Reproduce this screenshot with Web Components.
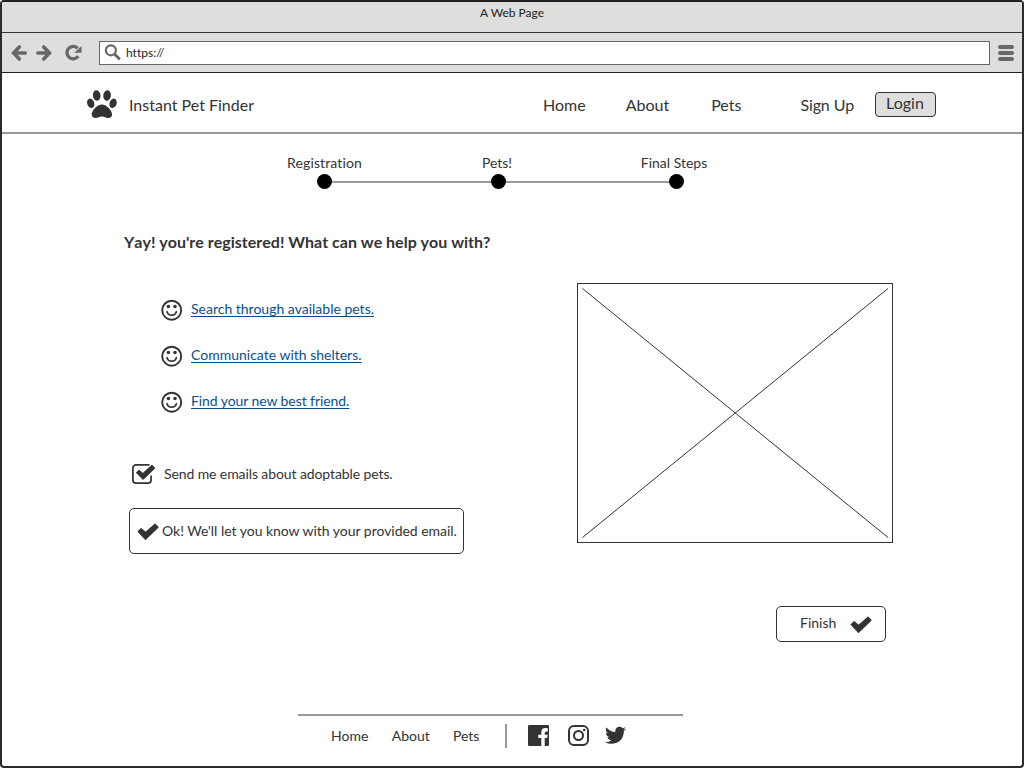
<!DOCTYPE html>
<html lang="en">
<head>
<meta charset="utf-8">
<title>Instant Pet Finder</title>
<style>
html, body { margin: 0; height: 100%; background: #fff; overflow: hidden; }
body { font: 14px/18px Lato, "Liberation Sans", sans-serif; font-variant-ligatures: none; color: #333; }
</style>
</head>
<body>
<browser-window heading="A Web Page" url="https://">
  <site-header></site-header>
  <progress-steps></progress-steps>
  <welcome-page></welcome-page>
  <site-footer></site-footer>
</browser-window>
<script>
const icons = {
  back: '<path d="M8.300 2 2.600 8l5.700 6M4 8h10.200" fill="none" stroke="currentColor" stroke-width="3.600" stroke-linecap="round"/>',
  forward: '<path d="M7.700 2 13.400 8l-5.700 6M12 8H1.800" fill="none" stroke="currentColor" stroke-width="3.600" stroke-linecap="round"/>',
  reload: '<path d="M13.200 12.300A6.200 6.200 0 1 1 12.600 4.300" fill="none" stroke="currentColor" stroke-width="3.300"/><path d="M16.500 2v6.700H9.200z" fill="currentColor"/>',
  search: '<circle cx="5.900" cy="6.300" r="5" fill="none" stroke="currentColor" stroke-width="2.200"/><path d="m10 10.500 4 4" stroke="currentColor" stroke-width="3" stroke-linecap="round"/>',
  menu: '<path d="M2 2h12M2 8h12M2 14h12" stroke="currentColor" stroke-width="4" stroke-linecap="round"/>',
  paw: '<g fill="currentColor"><ellipse cx="9.700" cy="5.500" rx="3.800" ry="5.300" transform="rotate(-8 9.700 5.500)"/><ellipse cx="20.100" cy="5.500" rx="3.800" ry="5.300" transform="rotate(8 20.100 5.500)"/><ellipse cx="3.700" cy="13.300" rx="3.500" ry="4.800" transform="rotate(-20 3.700 13.300)"/><ellipse cx="26.100" cy="13.300" rx="3.500" ry="4.800" transform="rotate(20 26.100 13.300)"/><path d="M14.900 14.600c4.800 0 10.200 6.200 10.200 10 0 2.300-1.700 3.400-3.900 3.400-2.500 0-3.800-1.400-6.300-1.400S11.100 28 8.600 28c-2.200 0-3.900-1.100-3.900-3.400 0-3.800 5.400-10 10.200-10z"/></g>',
  smile: '<circle cx="10.700" cy="11.200" r="9.500" fill="none" stroke="currentColor" stroke-width="1.900"/><circle cx="7.400" cy="7.600" r="1.750" fill="currentColor"/><circle cx="14" cy="7.600" r="1.750" fill="currentColor"/><path d="M6 12.700a4.900 4.900 0 0 0 9.400 0" fill="none" stroke="currentColor" stroke-width="1.700" stroke-linecap="round"/>',
  check: '<path d="m1.200 8.600 2.900-2.900 4.500 3.800L18 1.200l3 3L8.500 16.300z" fill="currentColor" stroke="currentColor" stroke-width="1.200" stroke-linejoin="round"/>',
  checkbox: '<path d="M17.500.9H4A3.100 3.100 0 0 0 .9 4v12A3.100 3.100 0 0 0 4 19.100h12a3.100 3.100 0 0 0 3.100-3.100v-4.500" fill="none" stroke="currentColor" stroke-width="1.700"/><path d="m4.600 8.600 2.500-2.200 3.800 3.300 9-8.200 2.700 2.600L11 15.200z" fill="currentColor" stroke="currentColor" stroke-width="1.200" stroke-linejoin="round"/>',
  facebook: '<path fill="currentColor" d="M1.200 0h18.600Q21 0 21 1.200v18.600q0 1.200-1.200 1.200H16.700v-8h2.500l.5-3.300h-3V7.900q0-1.500 1.600-1.500h1.500V3.200q-.8-.2-2.400-.2-4.100 0-4.100 4.300v2.400h-3V13h3v8H1.200Q0 21 0 19.800V1.200Q0 0 1.200 0z"/>',
  instagram: '<rect x="1" y="1" width="19" height="19" rx="5" fill="none" stroke="currentColor" stroke-width="2"/><circle cx="10.500" cy="10.500" r="4.500" fill="none" stroke="currentColor" stroke-width="2"/><circle cx="16.200" cy="4.900" r="1.250" fill="currentColor"/>',
  twitter: '<path fill="currentColor" transform="translate(0 .8) scale(.01332) translate(-108 -256)" d="M1684 408q-67 98-162 167 1 14 1 42 0 130-38 259.500t-115.500 248.500-184.500 210.500-258 146-323 54.500q-271 0-496-145 35 4 78 4 225 0 401-138-105-2-188-64.500t-114-159.500q33 5 61 5 43 0 85-11-112-23-185.500-111.500t-73.500-205.500v-4q68 38 146 41-66-44-105-115t-39-154q0-88 44-163 121 149 294.500 238.500t371.500 99.500q-8-38-8-74 0-134 94.500-228.500t228.500-94.500q140 0 236 102 109-21 205-78-37 115-142 178 93-10 186-50z"/>'
};
const sizes = { back: [16, 16], forward: [16, 16], reload: [17, 17], search: [17, 17], menu: [16, 16], paw: [30, 28], smile: [22, 22], check: [22, 17], checkbox: [23, 20], facebook: [21, 21], instagram: [21, 21], twitter: [21, 18] };

class Base extends HTMLElement {
  connectedCallback() {
    if (!this.shadowRoot) this.attachShadow({ mode: "open" }).innerHTML = this.view();
  }
}
const define = (name, view) => customElements.define(name, class extends Base { view() { return view(this); } });

define("ui-icon", el => {
  const n = el.getAttribute("name"), [w, h] = sizes[n];
  return `<style>:host{display:block;flex:none;width:${w}px;height:${h}px}svg{display:block;overflow:visible}</style>
  <svg width="${w}" height="${h}" viewBox="0 0 ${w} ${h}" aria-hidden="true">${icons[n]}</svg>`;
});

define("browser-window", el => `<style>
  :host{display:flex;flex-direction:column;box-sizing:border-box;width:1024px;height:768px;border:2px solid #2b292b;border-top-color:#231f20;border-radius:4px;overflow:hidden}
  .title{box-sizing:border-box;height:31px;padding-top:3px;background:#dededc;border-bottom:1px solid #333;text-align:center;font-size:12px;line-height:16px;color:#222}
  .bar{display:flex;align-items:center;box-sizing:border-box;height:40px;background:#dededc;border-bottom:1px solid #222;padding:0 8px 0 9px;color:#686868}
  .fwd{margin-left:9px}.rel{margin-left:13px}
  .url{display:flex;align-items:center;flex:1;height:22px;margin:0 8px 0 17px;border:1px solid #666;background:#fff;padding-left:5px;color:#222;font-size:12px;line-height:16px}
  .url ui-icon{color:#686868;margin-right:4px}
  main{flex:1;display:flex;flex-direction:column;min-height:0}
  </style>
  <div class="title">${el.getAttribute("heading")}</div>
  <div class="bar"><ui-icon name="back"></ui-icon><ui-icon class="fwd" name="forward"></ui-icon><ui-icon class="rel" name="reload"></ui-icon>
  <div class="url"><ui-icon name="search"></ui-icon>${el.getAttribute("url")}</div><ui-icon name="menu"></ui-icon></div>
  <main><slot></slot></main>`);

define("site-header", () => `<style>
  :host{display:flex;align-items:flex-start;box-sizing:border-box;height:61px;padding:17px 86px 0 85px;border-bottom:2px solid #999;font-size:16px;line-height:20px}
  .brand{margin:5px 0 0 12px}
  nav{display:flex;gap:41px;margin:5px 0 0 auto}
  nav span:nth-child(2){margin-left:-1px}
  nav span:last-child{margin-left:1px}
  .sign{margin:5px 21px 0 59px;letter-spacing:-.1px}
  button{display:block;box-sizing:border-box;width:61px;height:25px;margin:2px 0 0;padding:0 1px 3px 0;border:1px solid #333;border-radius:4px;background:#dedede;color:#333;font:16px/20px Lato,sans-serif}
  </style>
  <ui-icon name="paw"></ui-icon><span class="brand">Instant Pet Finder</span>
  <nav><span>Home</span><span>About</span><span>Pets</span></nav><span class="sign">Sign Up</span><button>Login</button>`);

define("progress-steps", () => `<style>
  :host{display:block;padding:20px 0 0 272px}
  .labels{display:grid;grid-template-columns:101px 72px 100px 77px 100px;text-align:center}
  .labels span:first-child{letter-spacing:.12px}
  .labels span:nth-child(2){grid-column:3}.labels span:nth-child(3){grid-column:5}
  .track{display:flex;align-items:center;width:367px;margin:2px 0 0 43px}
  i{width:15px;height:15px;border-radius:50%;background:#000}
  b{height:2px;background:#999;width:159px}b+i+b{width:163px}
  </style>
  <div class="labels"><span>Registration</span><span>Pets!</span><span>Final Steps</span></div>
  <div class="track"><i></i><b></b><i></i><b></b><i></i></div>`);

define("help-link", () => `<style>
  :host{display:flex;align-items:center;height:22px;gap:8px}
  a{color:#0b4f8a;text-decoration:underline;text-decoration-thickness:1px;text-underline-offset:2px;text-decoration-skip-ink:none;margin-top:-2px}
  </style><ui-icon name="smile"></ui-icon><a href="#"><slot></slot></a>`);

define("image-placeholder", () => `<style>
  :host{display:block;box-sizing:border-box;width:316px;height:260px;border:1px solid #333}
  svg{display:block}
  </style><svg width="314" height="258" viewBox="0 0 314 258"><path d="M4.500 4.500 310 253.500M310 4.500 4.500 253.500" stroke="#333"/></svg>`);

define("finish-button", () => `<style>
  :host{display:flex;box-sizing:border-box;width:110px;height:36px;border:1px solid #333;border-radius:5px;padding:7px 0 0 23px}
  ui-icon{margin:2px 0 0 14px}
  </style><span><slot></slot></span><ui-icon name="check"></ui-icon>`);

define("email-notice", () => `<style>
  :host{display:flex;align-items:center;box-sizing:border-box;width:335px;height:46px;border:1px solid #333;border-radius:5px;padding-left:7px;gap:3px;white-space:nowrap;letter-spacing:-.03px}
  </style><ui-icon name="check"></ui-icon><slot></slot>`);

define("welcome-page", () => `<style>
  :host{display:block;padding:43px 129px 0 122px}
  h1{margin:0;font-size:16px;line-height:20px;font-weight:700;font-kerning:none}
  .cols{display:flex;justify-content:space-between;margin-top:31px}
  .links{display:grid;gap:24px;padding:16px 0 0 37px}
  .links help-link:last-child{letter-spacing:-.08px}
  .opt{display:flex;align-items:center;gap:9px;margin:51px 0 24px 8px;height:20px;letter-spacing:-.1px}
  email-notice{margin-left:5px}
  finish-button{margin:52px 7px 0 auto}
  </style>
  <h1>Yay! you're registered! What can we help you with?</h1>
  <div class="cols"><section>
    <div class="links"><help-link>Search through available pets.</help-link><help-link>Communicate with shelters.</help-link><help-link>Find your new best friend.</help-link></div>
    <div class="opt"><ui-icon name="checkbox"></ui-icon><span>Send me emails about adoptable pets.</span></div>
    <email-notice>Ok! We'll let you know with your provided email.</email-notice>
  </section><image-placeholder></image-placeholder></div>
  <finish-button>Finish</finish-button>`);

define("site-footer", () => `<style>
  :host{display:flex;align-items:center;box-sizing:border-box;width:385px;margin:auto 0 18px 296px;border-top:2px solid #999;padding:8px 0 0 33px}
  .g{margin-left:23px}.a{margin-left:23.500px}
  .bar{width:2px;height:24px;background:#999;margin:0 21px 0 25.500px}
  ui-icon{margin-top:-2px}
  .i{margin-left:19px}.t{margin-left:16px}
  </style><span>Home</span><span class="a">About</span><span class="g">Pets</span><div class="bar"></div>
  <ui-icon name="facebook"></ui-icon><ui-icon class="i" name="instagram"></ui-icon><ui-icon class="t" name="twitter"></ui-icon>`);
</script>
</body>
</html>
